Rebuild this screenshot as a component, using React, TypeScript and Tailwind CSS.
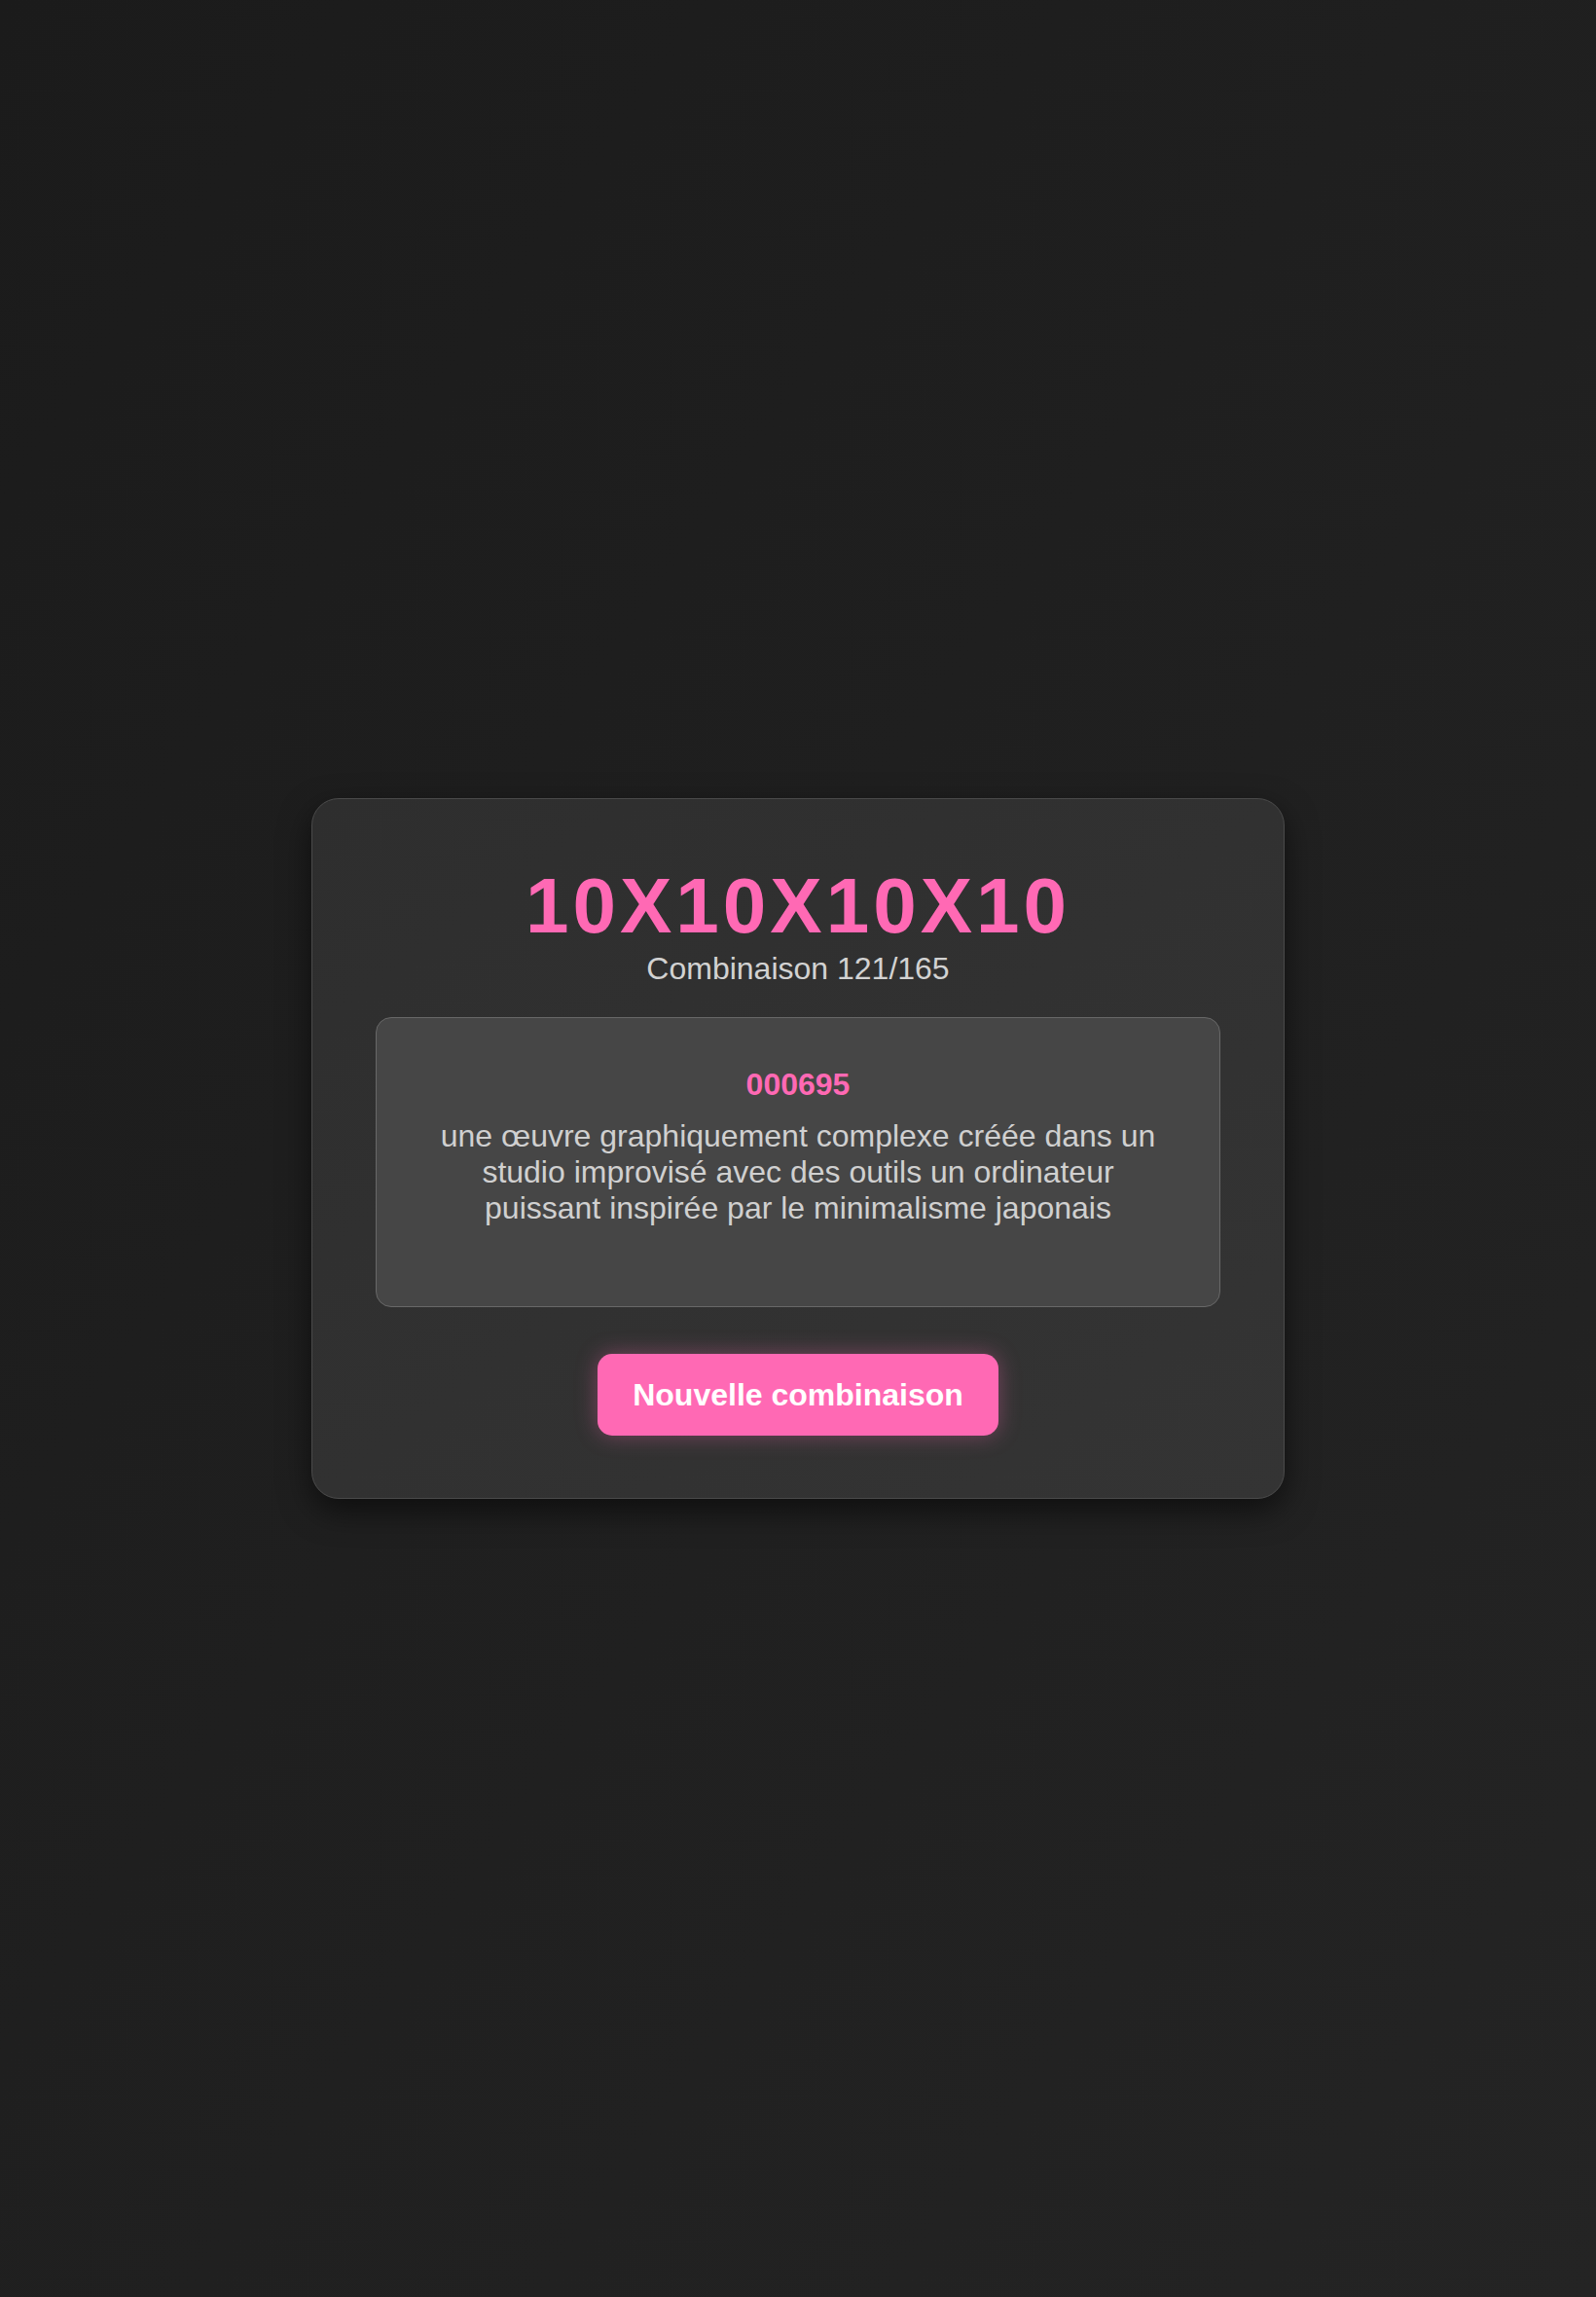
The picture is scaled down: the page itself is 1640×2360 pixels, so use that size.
export default function App() {
  const code = "000695"
  const description =
    "une œuvre graphiquement complexe créée dans un studio improvisé avec des outils un ordinateur puissant inspirée par le minimalisme japonais"

  return (
    <div className="flex min-h-screen items-center justify-center bg-gradient-to-br from-[#1b1b1b] to-[#242424] font-['Liberation_Sans',Arial,sans-serif]">
      <div className="flex w-[1000px] flex-col items-center rounded-[28px] border border-[#4a4a4a] bg-gradient-to-br from-[#2e2e2e] to-[#343434] px-[65px] pt-16 pb-16 text-center shadow-[0_12px_32px_rgba(0,0,0,0.55)]">
        <h1 className="text-[80px] font-bold leading-[1.15] tracking-[4px] text-[#ff69b4]">10X10X10X10</h1>
        <p className="text-[32px] leading-[1.15] text-[#d2d2d2]">Combinaison 121/165</p>

        <div className="mt-8 w-full rounded-2xl border border-[#686868] bg-[#464646] px-12 pt-[50px] pb-[82px]">
          <div className="text-[32px] font-bold leading-[1.15] text-[#ff69b4]">{code}</div>
          <p className="mt-4 text-[32px] leading-[1.15] text-[#d0d0d0]">{description}</p>
        </div>

        <button className="mt-12 rounded-[15px] bg-[#ff69b4] px-9 py-6 text-[32px] font-bold leading-[1.15] text-white shadow-[0_0_22px_rgba(255,105,180,0.35)]">
          Nouvelle combinaison
        </button>
      </div>
    </div>
  )
}
